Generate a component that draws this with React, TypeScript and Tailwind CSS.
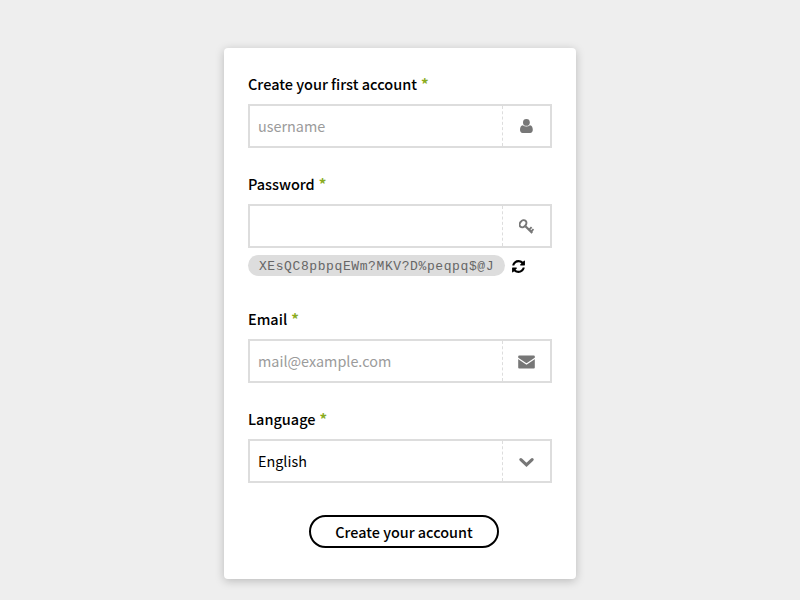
import React from "react";

const refreshPath =
  "M1639 1056q0 5-1 7-64 268-268 434.5t-478 166.5q-146 0-282.5-55t-243.5-157l-129 129q-19 19-45 19t-45-19-19-45v-448q0-26 19-45t45-19h448q26 0 45 19t19 45-19 45l-137 137q71 66 161 102t187 36q134 0 250-65t186-179q11-17 53-117 8-23 30-23h192q13 0 22.5 9.5t9.5 22.5zm25-800v448q0 26-19 45t-45 19h-448q-26 0-45-19t-19-45 19-45l138-138q-148-137-349-137-134 0-250 65t-186 179q-11 17-53 117-8 23-30 23h-199q-13 0-22.5-9.5t-9.5-22.5v-7q65-268 270-434.5t480-166.5q146 0 284 55.5t245 156.5l130-129q19-19 45-19t45 19 19 45z";

function Field({ label, value, placeholder, icon }: { label: string; value?: string; placeholder?: string; icon: React.ReactNode }) {
  return (
    <div>
      <div className="flex h-5 items-center text-[14.5px] font-medium text-black">
        {label}
        <span className="mt-px ml-1 text-[15px] font-bold text-[#8aac1e]">*</span>
      </div>
      <div className="mt-2.5 flex h-11 w-[304px] border-2 border-[#dddddd] bg-white">
        <div className={"flex flex-1 items-center pl-2 text-[14.4px] " + (value ? "text-black" : "text-[#9b9b9b]")}>
          {value || placeholder}
        </div>
        <div className="flex w-12 items-center justify-center border-l border-dashed border-[#dddddd] text-[#777777]">{icon}</div>
      </div>
    </div>
  );
}

export default function App() {
  return (
    <main className="flex h-[600px] w-[800px] justify-center bg-[#eeeeee] pt-12 font-['Noto_Sans_CJK_SC',sans-serif]">
      <div className="h-[531px] w-[352px] rounded bg-white px-6 pt-[26px] shadow-[0_2px_10px_rgba(0,0,0,0.22)]">
        <Field
          label="Create your first account"
          placeholder="username"
          icon={
            <svg viewBox="0 0 16 16" className="size-4 fill-current">
              <circle cx="7.4" cy="4.4" r="3.4" />
              <path d="M3.8 7.2Q5.4 8.6 7.4 8.6t3.6-1.4c2 .3 2.8 2.2 2.8 4.6 0 2-1 3.2-2.6 3.2H3.6C2 15 1 13.8 1 11.8c0-2.4.8-4.3 2.8-4.6z" />
            </svg>
          }
        />
        <div className="mt-[26px]">
          <Field
            label="Password"
            icon={
              <svg viewBox="0 0 16 16" className="mt-px size-4 fill-none stroke-current">
                <ellipse cx="4" cy="4.7" rx="3" ry="3.9" strokeWidth="2" transform="rotate(40 4 4.7)" />
                <path d="m6.4 7.2 6.9 6.7" strokeWidth="2.2" />
                <path d="m10.2 10.6 2.4-2.5M12.1 12.6l2.4-2.4" strokeWidth="1.8" />
              </svg>
            }
          />
        </div>
        <div className="mt-[7px] flex h-[21px] items-center">
          <div className="flex h-[21px] w-[257px] items-center justify-center rounded-full bg-[#dddddd] pt-0.5 font-['Liberation_Mono',monospace] text-[13px] tracking-[0.6px] text-[#666666]">
            XEsQC8pbpqEWm?MKV?D%peqpq$@J
          </div>
          <svg viewBox="0 0 1792 1792" className="mt-0.5 ml-[6px] size-[15px] fill-black"><path d={refreshPath} /></svg>
        </div>
        <div className="mt-[33px]">
          <Field
            label="Email"
            placeholder="mail@example.com"
            icon={
              <svg viewBox="0 0 18 14" className="mt-px h-3.5 w-[18px]">
                <rect x="0.2" y="0.5" width="16.6" height="13" rx="1" fill="currentColor" />
                <path d="M-.1 3.2 8.5 9l8.6-5.8" fill="none" stroke="white" strokeWidth="1.2" />
              </svg>
            }
          />
        </div>
        <div className="mt-[26px]">
          <Field
            label="Language"
            value="English"
            icon={
              <svg viewBox="0 0 16 16" className="mt-px size-4 fill-none stroke-current">
                <path d="m1.9 5.6 5.6 5.2 5.6-5.2" strokeWidth="3.1" strokeLinecap="round" />
              </svg>
            }
          />
        </div>
        <button className="mt-8 ml-[61px] flex h-[33px] w-[190px] items-center justify-center rounded-full border-2 border-black bg-white text-[14.4px] font-medium text-black">
          Create your account
        </button>
      </div>
    </main>
  );
}
